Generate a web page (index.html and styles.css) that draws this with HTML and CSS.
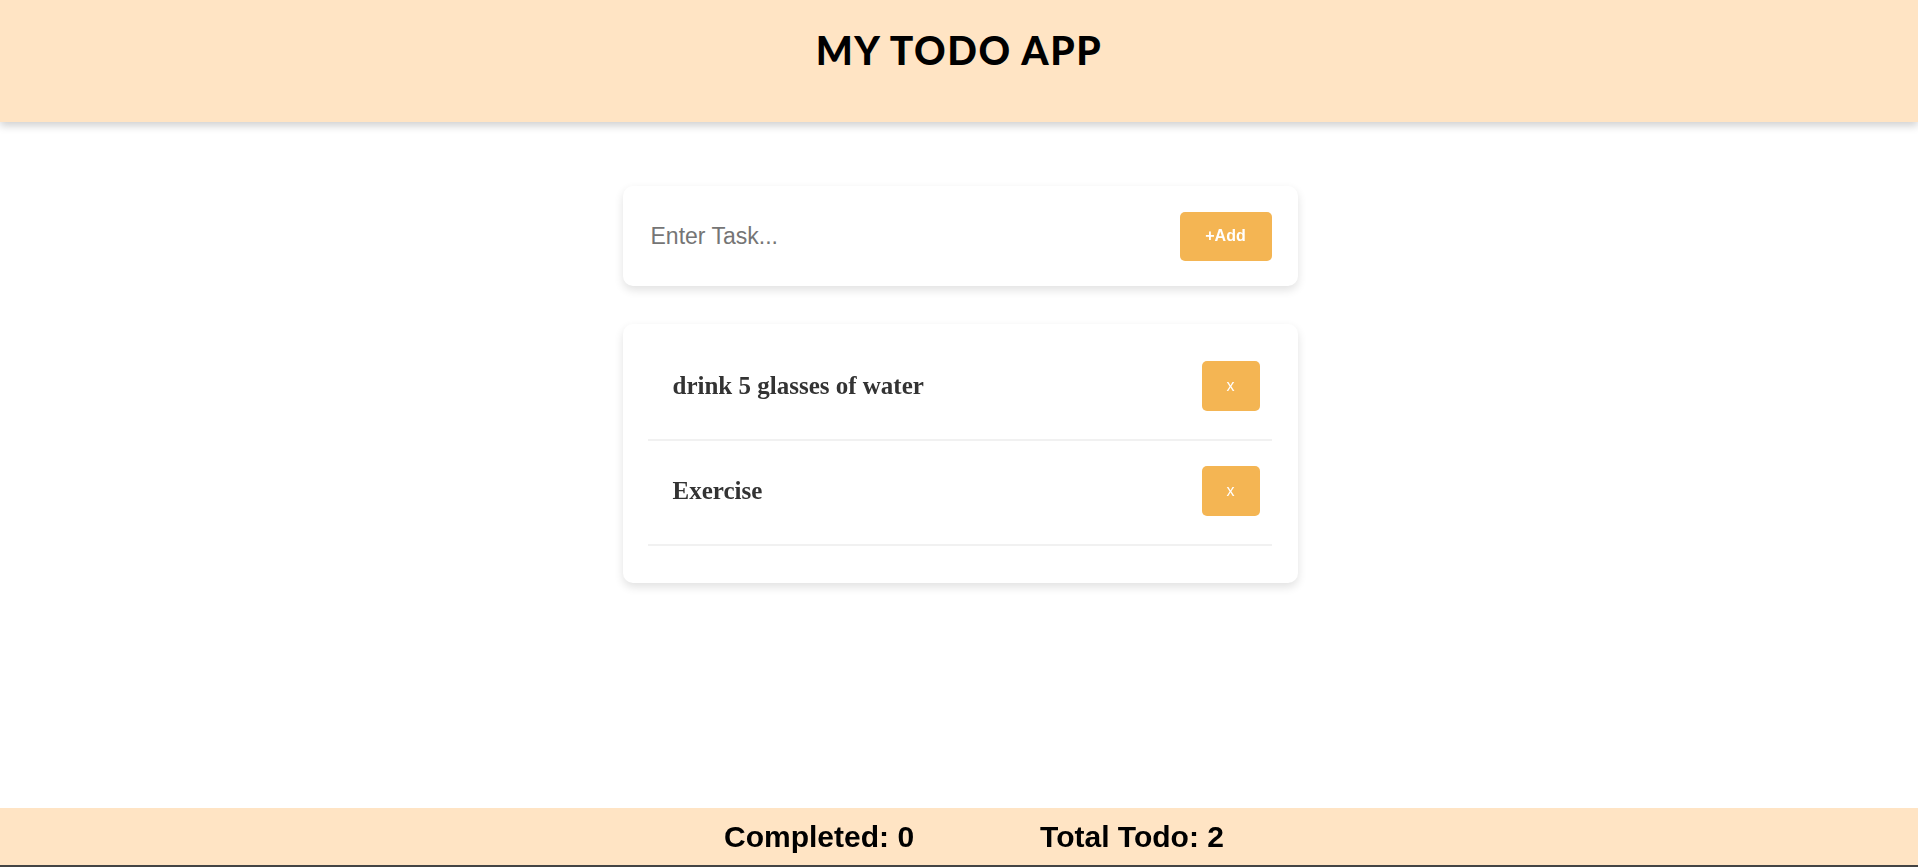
FILE: index.html
```html
<!DOCTYPE html>
<html lang="en">
<head>
<meta charset="UTF-8">
<title>My Todo App</title>
<link rel="stylesheet" href="styles.css">
</head>
<body>
<header class="app-header">
  <h1 class="app-title">MY TODO APP</h1>
</header>
<main class="app-main">
  <section class="card input-card">
    <input class="task-input" type="text" placeholder="Enter Task..." autofocus>
    <button class="btn add-btn">+Add</button>
  </section>
  <section class="card list-card">
    <div class="todo-item">
      <h3 class="todo-text">drink 5 glasses of water</h3>
      <button class="btn del-btn">x</button>
    </div>
    <div class="todo-item">
      <h3 class="todo-text">Exercise</h3>
      <button class="btn del-btn">x</button>
    </div>
  </section>
</main>
<footer class="app-footer">
  <span class="stat">Completed: 0</span>
  <span class="stat">Total Todo: 2</span>
</footer>
</body>
</html>
```
FILE: styles.css
```css
* { box-sizing: border-box; }
html, body { margin: 0; padding: 0; }
body {
  min-height: 100vh;
  display: flex;
  flex-direction: column;
  background: #ffffff;
  font-family: "Liberation Sans", Arial, sans-serif;
}
.app-header {
  height: 122px;
  background: #ffe4c4;
  padding-top: 27px;
  box-shadow: 0 4px 8px rgba(0, 0, 0, 0.18);
  display: flex;
  justify-content: center;
  align-items: flex-start;
  position: relative;
  z-index: 1;
}
.app-title {
  margin: 0;
  font-family: Lato, "DejaVu Sans", sans-serif;
  font-weight: 900;
  font-size: 39px;
  line-height: 47px;
  letter-spacing: 1.6px;
  color: #000;
}
.app-main {
  flex: 1;
  padding-top: 64px;
  padding-left: 2px;
  display: flex;
  flex-direction: column;
  align-items: center;
  gap: 38px;
}
.card {
  width: 675px;
  background: #fff;
  border-radius: 10px;
  box-shadow: 0 4px 10px rgba(0, 0, 0, 0.12);
}
.input-card {
  display: flex;
  align-items: center;
  padding: 25px 26px 25px 25px;
  height: 100px;
}
.task-input {
  flex: 1;
  border: none;
  outline: none;
  font-family: "Liberation Sans", Arial, sans-serif;
  font-size: 23px;
  padding: 0 0 0 3px;
  color: #333;
  background: transparent;
}
.task-input::placeholder { color: #757575; }
.btn {
  border: none;
  background: #f4b553;
  color: #fff;
  font-family: "Liberation Sans", Arial, sans-serif;
  border-radius: 5px;
  cursor: pointer;
}
.add-btn {
  width: 92px;
  height: 49px;
  font-size: 16px;
  font-weight: bold;
}
.list-card {
  padding: 12px 26px 37px 25px;
}
.todo-item {
  display: flex;
  align-items: center;
  justify-content: space-between;
  padding: 25px 12px 28px 25px;
  border-bottom: 2px solid #f1f1f1;
}
.todo-text {
  margin: 0;
  font-family: "Liberation Serif", "Times New Roman", serif;
  font-weight: bold;
  font-size: 25px;
  color: #333;
}
.del-btn {
  width: 58px;
  height: 50px;
  font-size: 16px;
}
.app-footer {
  height: 59px;
  background: #ffe4c4;
  border-bottom: 2px solid #444;
  display: flex;
  justify-content: center;
  align-items: center;
  gap: 126px;
  padding-left: 30px;
}
.stat {
  font-family: "Liberation Sans", Arial, sans-serif;
  font-weight: bold;
  font-size: 30px;
  color: #000;
}
```
